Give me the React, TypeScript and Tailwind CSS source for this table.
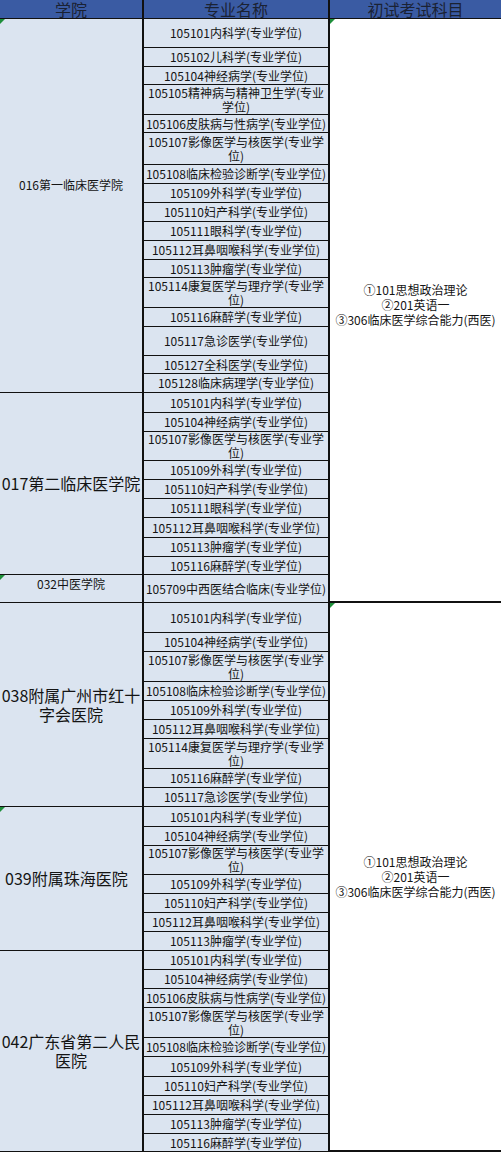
type Row = [string, number];

type Group = {
  name: string;
  nameClass: string;
  rows: Row[];
  mark?: boolean;
};

const blockA: Group[] = [
  {
    name: "016第一临床医学院",
    nameClass: "items-center justify-center pb-[42px] text-[12px] leading-[14px]",
    mark: true,
    rows: [
      ["105101内科学(专业学位)", 29],
      ["105102儿科学(专业学位)", 19],
      ["105104神经病学(专业学位)", 18],
      ["105105精神病与精神卫生学(专业\n学位)", 30],
      ["105106皮肤病与性病学(专业学位)", 18],
      ["105107影像医学与核医学(专业学\n位)", 32],
      ["105108临床检验诊断学(专业学位)", 19],
      ["105109外科学(专业学位)", 19],
      ["105110妇产科学(专业学位)", 19],
      ["105111眼科学(专业学位)", 19],
      ["105112耳鼻咽喉科学(专业学位)", 19],
      ["105113肿瘤学(专业学位)", 18],
      ["105114康复医学与理疗学(专业学\n位)", 30],
      ["105116麻醉学(专业学位)", 19],
      ["105117急诊医学(专业学位)", 29],
      ["105127全科医学(专业学位)", 18],
      ["105128临床病理学(专业学位)", 19],
    ],
  },
  {
    name: "017第二临床医学院",
    nameClass: "items-center justify-center text-[16px] leading-[19px]",
    rows: [
      ["105101内科学(专业学位)", 20],
      ["105104神经病学(专业学位)", 19],
      ["105107影像医学与核医学(专业学\n位)", 29],
      ["105109外科学(专业学位)", 19],
      ["105110妇产科学(专业学位)", 19],
      ["105111眼科学(专业学位)", 19],
      ["105112耳鼻咽喉科学(专业学位)", 20],
      ["105113肿瘤学(专业学位)", 19],
      ["105116麻醉学(专业学位)", 18],
    ],
  },
  {
    name: "032中医学院",
    nameClass: "items-start justify-center pt-[2px] text-[12px] leading-[14px]",
    mark: true,
    rows: [["105709中西医结合临床(专业学位)", 28]],
  },
];

const blockB: Group[] = [
  {
    name: "038附属广州市红十\n字会医院",
    nameClass: "items-center justify-center text-[16px] leading-[19px]",
    rows: [
      ["105101内科学(专业学位)", 30],
      ["105104神经病学(专业学位)", 19],
      ["105107影像医学与核医学(专业学\n位)", 30],
      ["105108临床检验诊断学(专业学位)", 19],
      ["105109外科学(专业学位)", 19],
      ["105112耳鼻咽喉科学(专业学位)", 19],
      ["105114康复医学与理疗学(专业学\n位)", 30],
      ["105116麻醉学(专业学位)", 19],
      ["105117急诊医学(专业学位)", 19],
    ],
  },
  {
    name: "039附属珠海医院",
    nameClass: "items-center justify-start pl-[5px] text-[16px] leading-[19px]",
    mark: true,
    rows: [
      ["105101内科学(专业学位)", 20],
      ["105104神经病学(专业学位)", 19],
      ["105107影像医学与核医学(专业学\n位)", 29],
      ["105109外科学(专业学位)", 19],
      ["105110妇产科学(专业学位)", 19],
      ["105112耳鼻咽喉科学(专业学位)", 19],
      ["105113肿瘤学(专业学位)", 19],
    ],
  },
  {
    name: "042广东省第二人民\n医院",
    nameClass: "items-center justify-center text-[16px] leading-[19px]",
    rows: [
      ["105101内科学(专业学位)", 19],
      ["105104神经病学(专业学位)", 19],
      ["105106皮肤病与性病学(专业学位)", 19],
      ["105107影像医学与核医学(专业学\n位)", 30],
      ["105108临床检验诊断学(专业学位)", 19],
      ["105109外科学(专业学位)", 20],
      ["105110妇产科学(专业学位)", 19],
      ["105112耳鼻咽喉科学(专业学位)", 19],
      ["105113肿瘤学(专业学位)", 19],
      ["105116麻醉学(专业学位)", 18],
    ],
  },
];

const subjects = "①101思想政治理论\n②201英语一\n③306临床医学综合能力(西医)";

export default function App() {
  return (
    <main className="min-h-screen bg-white">
      <div className="w-[501px] font-['Noto_Sans_CJK_SC',sans-serif] text-[#141414]">
        <div className="flex h-[19px] bg-[#3a5ba3] border-b border-[#111] text-[16px] leading-[16px] text-[#1a2233]">
          <div className="w-[144px] flex items-center justify-center border-r-2 border-[#111]">学院</div>
          <div className="w-[186px] flex items-center justify-center border-r-2 border-[#111]">专业名称</div>
          <div className="flex-1 flex items-center justify-center">初试考试科目</div>
        </div>

        <Block groups={blockA} textClass="pb-[12px]" />
        <Block groups={blockB} textClass="" />
      </div>
    </main>
  );
}

function Block({ groups, textClass }: { groups: Group[]; textClass: string }) {
  return (
    <div className="flex">
      <div className="w-[330px] flex flex-col">
        {groups.map((g) => (
          <div key={g.name} className="flex">
            <div
              className={`relative w-[144px] flex whitespace-pre-line text-center bg-[#dbe4f0] border-r-2 border-b border-[#111] ${g.nameClass}`}
            >
              {g.mark && <Mark />}
              <span>{g.name}</span>
            </div>
            <div className="w-[186px] flex flex-col border-r-2 border-[#111] bg-[#dbe4f0]">
              {g.rows.map(([text, h], i) => (
                <div
                  key={i}
                  style={{ height: h }}
                  className="flex items-center justify-center border-b border-[#111] text-center text-[12px] leading-[14px] whitespace-pre-line"
                >
                  {text}
                </div>
              ))}
            </div>
          </div>
        ))}
      </div>
      <div
        className={`relative flex-1 flex items-center justify-center border-b-2 border-[#111] text-center text-[12px] leading-[15px] whitespace-pre-line ${textClass}`}
      >
        <Mark />
        <span>{subjects}</span>
      </div>
    </div>
  );
}

function Mark() {
  return (
    <span className="absolute left-0 top-0 w-0 h-0 border-t-[5px] border-r-[5px] border-t-[#1e8f3a] border-r-transparent" />
  );
}
